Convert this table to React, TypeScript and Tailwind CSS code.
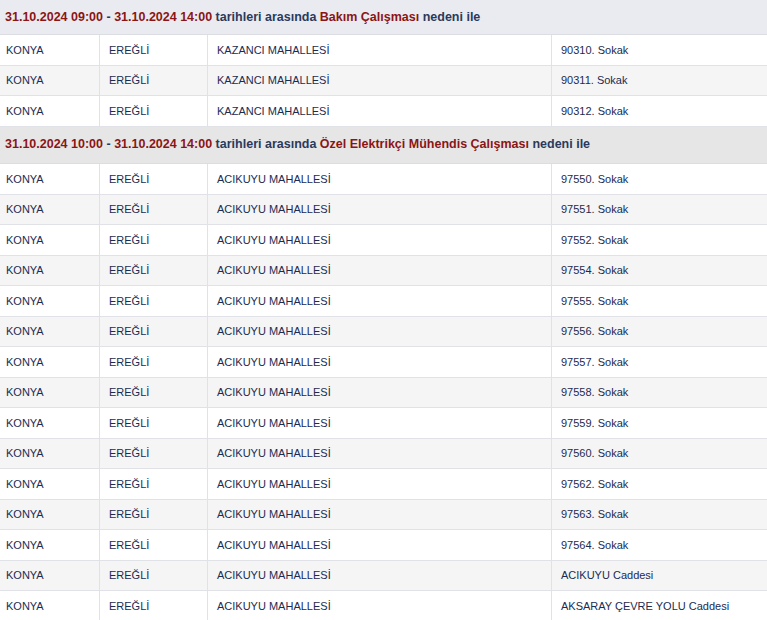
import React from "react";

type Row = { il: string; ilce: string; mahalle: string; sokak: string };

const groups: {
  start: string;
  end: string;
  reason: string;
  headBg: string;
  headH: string;
  rows: Row[];
}[] = [
  {
    start: "31.10.2024 09:00",
    end: "31.10.2024 14:00",
    reason: "Bakım Çalışması",
    headBg: "bg-[#e9ebf0]",
    headH: "h-[35px]",
    rows: ["90310", "90311", "90312"].map((n) => ({
      il: "KONYA",
      ilce: "EREĞLİ",
      mahalle: "KAZANCI MAHALLESİ",
      sokak: `${n}. Sokak`,
    })),
  },
  {
    start: "31.10.2024 10:00",
    end: "31.10.2024 14:00",
    reason: "Özel Elektrikçi Mühendis Çalışması",
    headBg: "bg-[#e6e6e6]",
    headH: "h-[37.5px]",
    rows: [
      ...[
        "97550",
        "97551",
        "97552",
        "97554",
        "97555",
        "97556",
        "97557",
        "97558",
        "97559",
        "97560",
        "97562",
        "97563",
        "97564",
      ].map((n) => `${n}. Sokak`),
      "ACIKUYU Caddesi",
      "AKSARAY ÇEVRE YOLU Caddesi",
    ].map((s) => ({
      il: "KONYA",
      ilce: "EREĞLİ",
      mahalle: "ACIKUYU MAHALLESİ",
      sokak: s,
    })),
  },
];

export default function App() {
  return (
    <div className="h-[620px] w-[767px] overflow-hidden bg-white font-['Liberation_Sans',Arial,sans-serif]">
      {groups.map((g, gi) => (
        <div key={gi}>
          {/* group header */}
          <div
            className={`${g.headBg} ${g.headH} flex items-center border-b border-[#dcdde3] pl-[5px] text-[12.5px] font-bold text-[#2b3a5c]`}
          >
            <span className="text-[#8b1515]">{g.start}</span>
            <span>&nbsp;-&nbsp;</span>
            <span className="text-[#8b1515]">{g.end}</span>
            <span>&nbsp;tarihleri arasında&nbsp;</span>
            <span className="text-[#8b1515]">{g.reason}</span>
            <span>&nbsp;nedeni ile</span>
          </div>

          {/* rows */}
          {g.rows.map((r, i) => (
            <div
              key={i}
              className={`grid h-[30.5px] grid-cols-[100px_108px_344px_1fr] border-b border-[#e1e2e8] text-[11px] text-[#1c2b50] ${
                i % 2 === 1 ? "bg-[#f5f5f5]" : "bg-white"
              }`}
            >
              <div className="flex items-center border-r border-[#e1e2e8] pl-[6px]">{r.il}</div>
              <div className="flex items-center border-r border-[#e1e2e8] pl-[9px]">{r.ilce}</div>
              <div className="flex items-center border-r border-[#e1e2e8] pl-[9px]">{r.mahalle}</div>
              <div className="flex items-center pl-[9px]">{r.sokak}</div>
            </div>
          ))}
        </div>
      ))}
    </div>
  );
}
